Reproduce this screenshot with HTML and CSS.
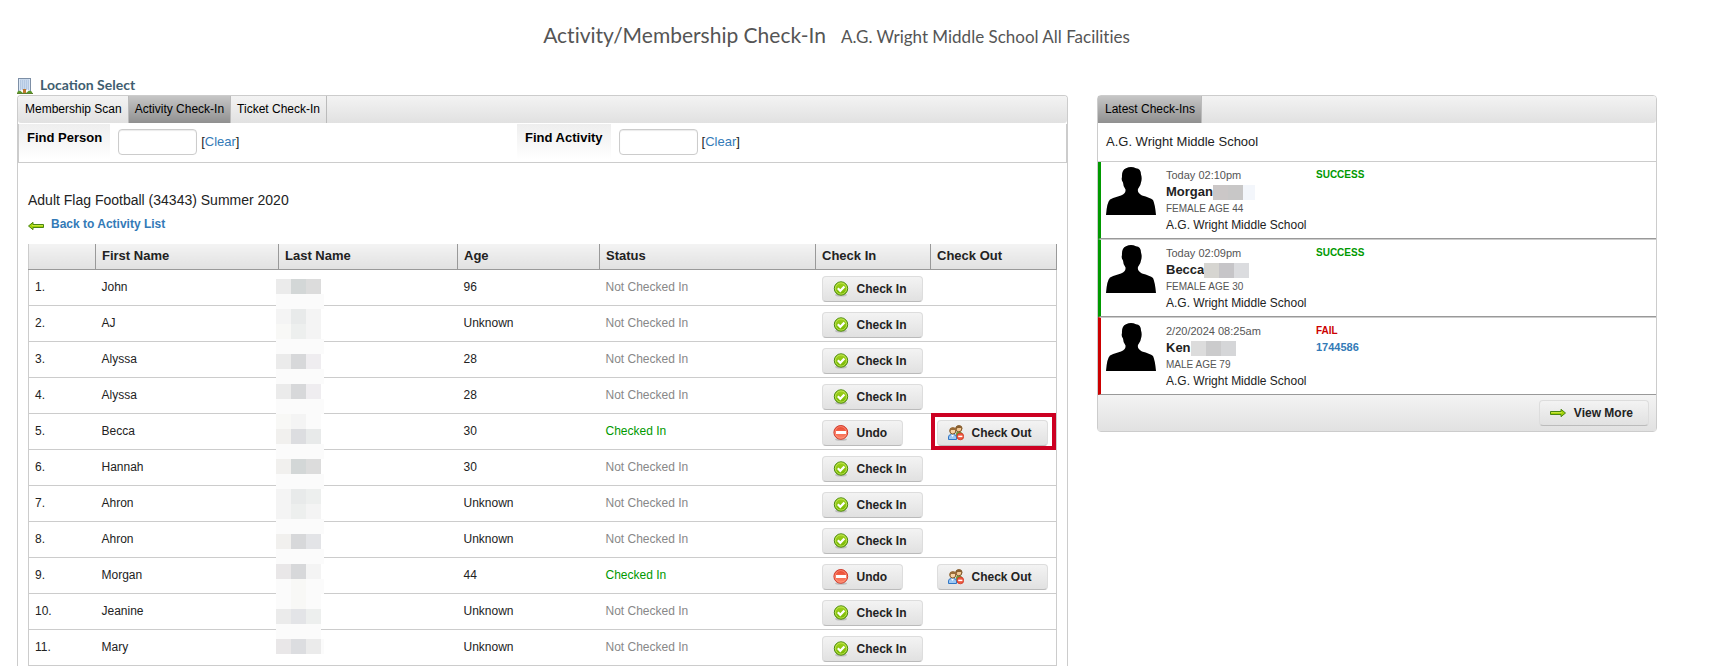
FILE: index.html
```html
<!DOCTYPE html>
<html lang="en">
<head>
    <meta charset="UTF-8">
    <meta name="viewport" content="width=device-width, initial-scale=1.0">
    <title>Activity/Membership Check-In</title>
    <link rel="stylesheet" href="styles.css">
</head>
<body>
    <!-- shared icons -->
    <svg class="icon-defs" aria-hidden="true">
        <defs>
            <linearGradient id="green" x1="0" y1="0" x2="0" y2="1">
                <stop offset="0" stop-color="#a4d420"/>
                <stop offset="1" stop-color="#72b400"/>
            </linearGradient>
            <linearGradient id="red" x1="0" y1="0" x2="0" y2="1">
                <stop offset="0" stop-color="#e8452f"/>
                <stop offset="1" stop-color="#ff8b6e"/>
            </linearGradient>
            <symbol id="icon-check" viewBox="0 0 16 16">
                <ellipse cx="8" cy="14" rx="6" ry="1.6" fill="#999" opacity=".5"/>
                <circle cx="8" cy="7.5" r="6.7" fill="url(#green)" stroke="#4c8a10"/>
                <circle cx="8" cy="7.5" r="5.6" fill="none" stroke="#c8ea62" stroke-width=".8"/>
                <path d="M4.8 7.2 7.3 9.8 11.4 5.4" fill="none" stroke="#fff" stroke-width="2.2"/>
            </symbol>
            <symbol id="icon-undo" viewBox="0 0 16 16">
                <ellipse cx="8" cy="14.4" rx="6" ry="1.4" fill="#999" opacity=".5"/>
                <circle cx="7.8" cy="7.4" r="6.9" fill="url(#red)" stroke="#cf3a2c"/>
                <circle cx="7.8" cy="7.4" r="5.8" fill="none" stroke="#ff9d85" stroke-width=".7"/>
                <rect x="3" y="6" width="10" height="3" fill="#fff"/>
            </symbol>
            <symbol id="icon-people" viewBox="0 0 16 16">
                <path d="M8 12V8.500q0-2 3-2t3.500 2.500V12z" fill="#6f9b3c"/>
                <circle cx="10.800" cy="3.800" r="3" fill="#f1c793" stroke="#7d5525"/>
                <path d="M7.500 3.800Q7.300.3 11 .3t3.400 3.900L13 3H9.500L8 5z" fill="#8a6030"/>
                <path d="M.5 14.500V12q0-2.500 3-2.500h2q3 0 3 2.500v2.500z" fill="#9cc8f4" stroke="#2f75c4"/>
                <path d="M3 9.500h3L4.500 12z" fill="#fff"/>
                <circle cx="4.800" cy="6" r="3" fill="#f7d3a4" stroke="#7d5525"/>
                <path d="M1.500 6Q1 2.200 5 2.200t3.300 4L7 5H3L2 7z" fill="#9a6c38"/>
                <circle cx="12.300" cy="11.400" r="3.400" fill="#f0573d" stroke="#c93a28" stroke-width=".8"/>
                <path d="M10.200 11.400h4.200" stroke="#fff" stroke-width="1.500"/>
            </symbol>
            <symbol id="icon-arrow" viewBox="0 0 16 16">
                <path d="M.5 6.500h10.500V4.300l4.500 3.700-4.500 3.700V9.500H.5z" fill="#a3d108" stroke="#4a8612"/>
                <path d="M1 7.500h11" stroke="#c4e63c"/>
            </symbol>
            <symbol id="icon-person" viewBox="0 0 50 48">
                <path d="M0 48Q1 35 4 32.500 8 30.500 15 28.500 20 26.500 19.500 22.500 17 19 17 15.500 15 13 16 10 15.500 3 20 1.200 25-1.200 30 1.200 35 1.500 35 7.500 36 10 35.500 13.500 35 18 32 22 31 26 36 28.500 44 30.500 47 33 49 37 50 48z"/>
            </symbol>
        </defs>
    </svg>

    <header class="page-header">
        <h1>Activity/Membership Check-In</h1>
        <span class="facility">A.G. Wright Middle School All Facilities</span>
    </header>

    <main class="layout">
        <a class="location-select" href="#">
            <svg class="building" viewBox="0 0 16 16" aria-hidden="true">
                <rect x="1.500" y=".5" width="12" height="14" fill="#dce8f6" stroke="#7d8fa6"/>
                <path d="M3 3h9M3 5h9M3 7h9M3 9h9M3 11h9" stroke="#8aa6ca" stroke-dasharray="1 1"/>
                <path d="M3 2h9M3 4h9M3 6h9M3 8h9M3 10h9" stroke="#b5cae4"/>
                <path d="M4 12h7v3H4z" fill="#fff"/>
                <rect x="6" y="11" width="3" height="4" fill="#c0762c"/>
                <path d="M0 15q1-3 3.500-2L6 15zM9 15l2.500-2q3-1 4 2z" fill="#5b9a2b"/>
                <path d="M0 15.500h16" stroke="#5d7f2e"/>
            </svg>
            Location Select
        </a>

        <section class="panel main-panel">
            <nav class="tab-bar">
                <a class="tab" href="#">Membership Scan</a>
                <a class="tab active" href="#">Activity Check-In</a>
                <a class="tab" href="#">Ticket Check-In</a>
            </nav>
            <div class="find-bar">
                <div class="find-group">
                    <label for="find-person">Find Person</label>
                    <input type="text" id="find-person">
                    <span>[<a href="#">Clear</a>]</span>
                </div>
                <div class="find-group">
                    <label for="find-activity">Find Activity</label>
                    <input type="text" id="find-activity">
                    <span>[<a href="#">Clear</a>]</span>
                </div>
            </div>

            <div class="activity">
                <h2>Adult Flag Football (34343) Summer 2020</h2>
                <a class="back-link" href="#">
                    <svg class="icon flip" aria-hidden="true"><use href="#icon-arrow"/></svg>
                    Back to Activity List
                </a>
                <table class="roster">
                    <colgroup>
                        <col class="col-number">
                        <col class="col-first">
                        <col class="col-last">
                        <col class="col-age">
                        <col class="col-status">
                        <col class="col-in">
                        <col class="col-out">
                    </colgroup>
                    <thead>
                        <tr>
                            <th></th>
                            <th>First Name</th>
                            <th>Last Name</th>
                            <th>Age</th>
                            <th>Status</th>
                            <th>Check In</th>
                            <th>Check Out</th>
                        </tr>
                    </thead>
                    <tbody>
                        <tr>
                            <td>1.</td>
                            <td>John</td>
                            <td class="masked">
                                <!-- hidden last names, drawn over the whole column -->
                                <svg class="name-mask" viewBox="0 0 48 375" shape-rendering="crispEdges" aria-hidden="true">
                                    <path fill="#fbfbfb" d="M0 0h45v15h3v15h-3v30h3v15h-3v15h3v15h-3v15h3v15h-3v30h3v15h-3v15h3v15h-3v30h3v15h-3v15h3v15h-3v15h3v15h-3v45h3v15h-3v15H0z"/>
                                    <path fill="#ebebeb" d="M0 0h15v15H0zM0 75h15v15H0zM0 105h15v15H0zM30 360h15v15H30zM0 330h15v15H0z"/>
                                    <path fill="#d3d7d7" d="M15 0h15v15H15zM15 180h15v15H15z"/>
                                    <path fill="#dcdcdc" d="M30 0h15v15H30zM30 180h15v15H30z"/>
                                    <path fill="#f4f4f4" d="M0 30h15v15H0zM30 30h15v15H30zM0 210h15v30H0zM30 45h15v15H30zM15 135h15v15H15zM30 225h15v15H30zM30 285h15v15H30z"/>
                                    <path fill="#e8eaea" d="M15 30h15v15H15zM30 150h15v15H30zM15 210h15v15H15z"/>
                                    <path fill="#edefee" d="M15 45h15v15H15zM30 210h15v15H30zM15 225h15v15H15zM30 330h15v15H30z"/>
                                    <path fill="#d7d8da" d="M15 75h15v15H15zM15 105h15v15H15zM15 255h15v15H15zM15 285h15v15H15z"/>
                                    <path fill="#efedf0" d="M30 75h15v15H30zM30 105h15v15H30z"/>
                                    <path fill="#f1f0ee" d="M0 150h15v15H0zM0 180h15v15H0zM0 255h15v15H0z"/>
                                    <path fill="#dcdde0" d="M15 150h15v15H15zM15 360h15v15H15z"/>
                                    <path fill="#e3e4e7" d="M30 255h15v15H30zM15 330h15v15H15z"/>
                                    <path fill="#e9e7e8" d="M0 285h15v15H0zM0 360h15v15H0z"/>
                                    <path fill="#f8f8f6" d="M0 45h15v15H0zM15 300h15v30H15zM0 135h15v15H0z"/>
                                </svg>
                            </td>
                            <td>96</td>
                            <td class="not-checked">Not Checked In</td>
                            <td><button class="btn"><svg class="icon" aria-hidden="true"><use href="#icon-check"/></svg>Check In</button></td>
                            <td></td>
                        </tr>
                        <tr>
                            <td>2.</td>
                            <td>AJ</td>
                            <td></td>
                            <td>Unknown</td>
                            <td class="not-checked">Not Checked In</td>
                            <td><button class="btn"><svg class="icon" aria-hidden="true"><use href="#icon-check"/></svg>Check In</button></td>
                            <td></td>
                        </tr>
                        <tr>
                            <td>3.</td>
                            <td>Alyssa</td>
                            <td></td>
                            <td>28</td>
                            <td class="not-checked">Not Checked In</td>
                            <td><button class="btn"><svg class="icon" aria-hidden="true"><use href="#icon-check"/></svg>Check In</button></td>
                            <td></td>
                        </tr>
                        <tr>
                            <td>4.</td>
                            <td>Alyssa</td>
                            <td></td>
                            <td>28</td>
                            <td class="not-checked">Not Checked In</td>
                            <td><button class="btn"><svg class="icon" aria-hidden="true"><use href="#icon-check"/></svg>Check In</button></td>
                            <td></td>
                        </tr>
                        <tr>
                            <td>5.</td>
                            <td>Becca</td>
                            <td></td>
                            <td>30</td>
                            <td class="checked">Checked In</td>
                            <td><button class="btn"><svg class="icon" aria-hidden="true"><use href="#icon-undo"/></svg>Undo</button></td>
                            <td class="highlight"><button class="btn"><svg class="icon" aria-hidden="true"><use href="#icon-people"/></svg>Check Out</button></td>
                        </tr>
                        <tr>
                            <td>6.</td>
                            <td>Hannah</td>
                            <td></td>
                            <td>30</td>
                            <td class="not-checked">Not Checked In</td>
                            <td><button class="btn"><svg class="icon" aria-hidden="true"><use href="#icon-check"/></svg>Check In</button></td>
                            <td></td>
                        </tr>
                        <tr>
                            <td>7.</td>
                            <td>Ahron</td>
                            <td></td>
                            <td>Unknown</td>
                            <td class="not-checked">Not Checked In</td>
                            <td><button class="btn"><svg class="icon" aria-hidden="true"><use href="#icon-check"/></svg>Check In</button></td>
                            <td></td>
                        </tr>
                        <tr>
                            <td>8.</td>
                            <td>Ahron</td>
                            <td></td>
                            <td>Unknown</td>
                            <td class="not-checked">Not Checked In</td>
                            <td><button class="btn"><svg class="icon" aria-hidden="true"><use href="#icon-check"/></svg>Check In</button></td>
                            <td></td>
                        </tr>
                        <tr>
                            <td>9.</td>
                            <td>Morgan</td>
                            <td></td>
                            <td>44</td>
                            <td class="checked">Checked In</td>
                            <td><button class="btn"><svg class="icon" aria-hidden="true"><use href="#icon-undo"/></svg>Undo</button></td>
                            <td><button class="btn"><svg class="icon" aria-hidden="true"><use href="#icon-people"/></svg>Check Out</button></td>
                        </tr>
                        <tr>
                            <td>10.</td>
                            <td>Jeanine</td>
                            <td></td>
                            <td>Unknown</td>
                            <td class="not-checked">Not Checked In</td>
                            <td><button class="btn"><svg class="icon" aria-hidden="true"><use href="#icon-check"/></svg>Check In</button></td>
                            <td></td>
                        </tr>
                        <tr>
                            <td>11.</td>
                            <td>Mary</td>
                            <td></td>
                            <td>Unknown</td>
                            <td class="not-checked">Not Checked In</td>
                            <td><button class="btn"><svg class="icon" aria-hidden="true"><use href="#icon-check"/></svg>Check In</button></td>
                            <td></td>
                        </tr>
                    </tbody>
                </table>
            </div>
        </section>

        <aside class="panel latest-panel">
            <nav class="tab-bar">
                <a class="tab active" href="#">Latest Check-Ins</a>
            </nav>
            <div class="latest-location">A.G. Wright Middle School</div>
            <article class="checkin success">
                <svg class="avatar" role="img" aria-label="Photo"><use href="#icon-person"/></svg>
                <div class="checkin-info">
                    <div class="time">Today 02:10pm</div>
                    <div class="name">Morgan
                        <svg class="blocks" viewBox="0 0 45 15" aria-hidden="true"><path fill="#cbc7c7" d="M0 0h15v15H0z"/><path fill="#c8c7c7" d="M15 0h15v15H15z"/><path fill="#f3f6fb" d="M30 0h12v15H30z"/></svg>
                    </div>
                    <div class="details">FEMALE AGE 44</div>
                    <div class="place">A.G. Wright Middle School</div>
                </div>
                <div class="result">SUCCESS</div>
            </article>
            <article class="checkin success">
                <svg class="avatar" role="img" aria-label="Photo"><use href="#icon-person"/></svg>
                <div class="checkin-info">
                    <div class="time">Today 02:09pm</div>
                    <div class="name">Becca
                        <svg class="blocks" viewBox="0 0 45 15" aria-hidden="true"><path fill="#d6d5d1" d="M0 0h15v15H0z"/><path fill="#c6c5c8" d="M15 0h15v15H15z"/><path fill="#dbdcdf" d="M30 0h15v15H30z"/></svg>
                    </div>
                    <div class="details">FEMALE AGE 30</div>
                    <div class="place">A.G. Wright Middle School</div>
                </div>
                <div class="result">SUCCESS</div>
            </article>
            <article class="checkin fail">
                <svg class="avatar" role="img" aria-label="Photo"><use href="#icon-person"/></svg>
                <div class="checkin-info">
                    <div class="time">2/20/2024 08:25am</div>
                    <div class="name">Ken
                        <svg class="blocks" viewBox="0 0 45 15" aria-hidden="true"><path fill="#dcdcdc" d="M0 0h15v15H0z"/><path fill="#cbcbcc" d="M15 0h15v15H15z"/><path fill="#d5d6d8" d="M30 0h15v15H30z"/></svg>
                    </div>
                    <div class="details">MALE AGE 79</div>
                    <div class="place">A.G. Wright Middle School</div>
                </div>
                <div class="result">FAIL<a href="#">1744586</a></div>
            </article>
            <div class="panel-footer">
                <button class="btn"><svg class="icon" aria-hidden="true"><use href="#icon-arrow"/></svg>View More</button>
            </div>
        </aside>
    </main>
</body>
</html>
```

FILE: styles.css
```css
* {
    margin: 0;
    padding: 0;
    box-sizing: border-box;
}

body {
    font-family: "Liberation Sans", Arial, sans-serif;
    font-size: 12px;
    line-height: 16px;
    background: #fff;
    color: #222;
}

a {
    color: #337ab7;
    text-decoration: none;
}

.icon-defs {
    position: absolute;
    width: 0;
    height: 0;
}

.icon {
    width: 16px;
    height: 16px;
    flex: none;
}

.flip {
    transform: scaleX(-1);
}

.page-header {
    display: flex;
    justify-content: center;
    align-items: baseline;
    gap: 15px;
    padding: 19px 60px 0 0;
    height: 76px;
    font-family: Lato, sans-serif;
    font-variant-ligatures: none;
    line-height: 32px;
    color: #555;
}

.page-header h1 {
    font-size: 21px;
    font-weight: normal;
}

.facility {
    font-size: 17px;
}

.layout {
    display: grid;
    grid-template-columns: 1051fr 560fr;
    column-gap: 29px;
    align-items: start;
    padding: 0 76px 0 17px;
}

.location-select {
    grid-column: 1 / -1;
    display: flex;
    align-items: center;
    gap: 7px;
    height: 19px;
    padding-bottom: 1px;
    font-family: Lato, sans-serif;
    font-size: 14px;
    font-weight: bold;
    color: #3f5e70;
}

.building {
    width: 16px;
    height: 16px;
    align-self: flex-end;
}

.panel {
    border: 1px solid #ccc;
    border-radius: 4px;
}

.main-panel {
    border-bottom: none;
    border-radius: 4px 4px 0 0;
}

.tab-bar {
    display: flex;
    height: 27px;
    background: linear-gradient(#f3f3f3, #e1e1e1);
    border-radius: 3px;
}

.tab {
    padding: 5px 6px 6px 7px;
    border-right: 1px solid #bbb;
    color: #000;
}

.tab.active {
    background: linear-gradient(#c6c6c6, #909090);
}

.tab + .tab {
    padding-left: 6px;
}

.find-bar {
    display: grid;
    grid-template-columns: 499fr 550fr;
    margin-top: 1px;
    height: 39px;
    border: 1px solid #ccc;
    border-top: none;
    font-size: 13px;
}

.find-group {
    display: flex;
    align-items: center;
    padding-bottom: 2px;
}

.find-group label {
    align-self: stretch;
    padding: 6px 8px;
    margin-right: 8px;
    background: linear-gradient(#eee, #fff);
    font-weight: bold;
    color: #000;
}

.find-group input {
    width: 79px;
    height: 26px;
    margin-right: 4px;
    border: 1px solid #ccc;
    border-radius: 4px;
    box-shadow: inset 0 1px 1px rgba(0,0,0,0.08);
}

.activity {
    padding: 29px 10px 0;
}

.activity h2 {
    font-size: 14px;
    font-weight: normal;
    line-height: 16px;
}

.back-link {
    display: flex;
    align-items: center;
    gap: 7px;
    margin: 8px 0 12px;
    font-weight: bold;
}

.back-link .icon {
    align-self: flex-end;
    margin: 2px 0 -2px;
}

.roster {
    width: 100%;
    table-layout: fixed;
    border-collapse: collapse;
    border: 1px solid #ccc;
    border-top: none;
}

.col-number { width: 67px; }
.col-first { width: 183px; }
.col-last { width: 179px; }
.col-age { width: 142px; }
.col-in { width: 115px; }
.col-out { width: 126px; }

.roster th {
    height: 25px;
    padding: 0 6px;
    background: linear-gradient(#f3f3f3, #e1e1e1);
    border-bottom: 1px solid #999;
    font-size: 13px;
    text-align: left;
}

.roster th + th {
    border-left: 1px solid #999;
}

.roster th:last-child {
    border-right: 1px solid #999;
}

.roster td {
    height: 36px;
    padding: 0 6px;
    border-bottom: 1px solid #ccc;
}

.roster .btn {
    margin-top: 3px;
}

.roster .masked,
.roster .highlight {
    position: relative;
}

.name-mask {
    position: absolute;
    top: 9px;
    left: -3px;
    width: 48px;
    height: 375px;
}

.highlight::after {
    content: "";
    position: absolute;
    inset: -1px 0 -1px 0;
    border: 4px solid #cc0022;
    pointer-events: none;
}

.not-checked {
    color: #888;
}

.checked {
    color: #090;
}

.btn {
    display: flex;
    align-items: center;
    gap: 8px;
    height: 26px;
    padding: 0 15px 0 10px;
    background: linear-gradient(#f3f3f3, #e1e1e1);
    border: 1px solid #ddd;
    border-bottom-color: #bbb;
    border-radius: 4px;
    font-family: inherit;
    font-size: 12px;
    font-weight: bold;
    color: #222;
    cursor: pointer;
}

.latest-location {
    padding: 11px 8px;
    border-bottom: 1px solid #ccc;
    font-size: 13px;
}

.checkin {
    display: grid;
    grid-template-columns: 60px 150px 1fr;
    min-height: 77px;
    padding: 5px;
    border-bottom: 1px solid #999;
    border-left: 3px solid #090;
}

.checkin + .checkin {
    border-top: 1px solid #ccc;
}

.checkin.fail {
    border-left-color: #c00;
}

.avatar {
    width: 50px;
    height: 48px;
}

.time {
    font-size: 11px;
    color: #555;
}

.name {
    display: flex;
    align-items: center;
    height: 18px;
    font-size: 13px;
    font-weight: bold;
}

.blocks {
    width: 45px;
    height: 15px;
}

.details {
    font-size: 10px;
    color: #555;
}

.result {
    display: flex;
    flex-direction: column;
    font-size: 10px;
    font-weight: bold;
    color: #090;
}

.result a {
    font-size: 11px;
}

.fail .result {
    color: #c00;
}

.panel-footer {
    display: flex;
    justify-content: flex-end;
    padding: 5px 7px;
    background: linear-gradient(#f3f3f3, #e1e1e1);
}
```
